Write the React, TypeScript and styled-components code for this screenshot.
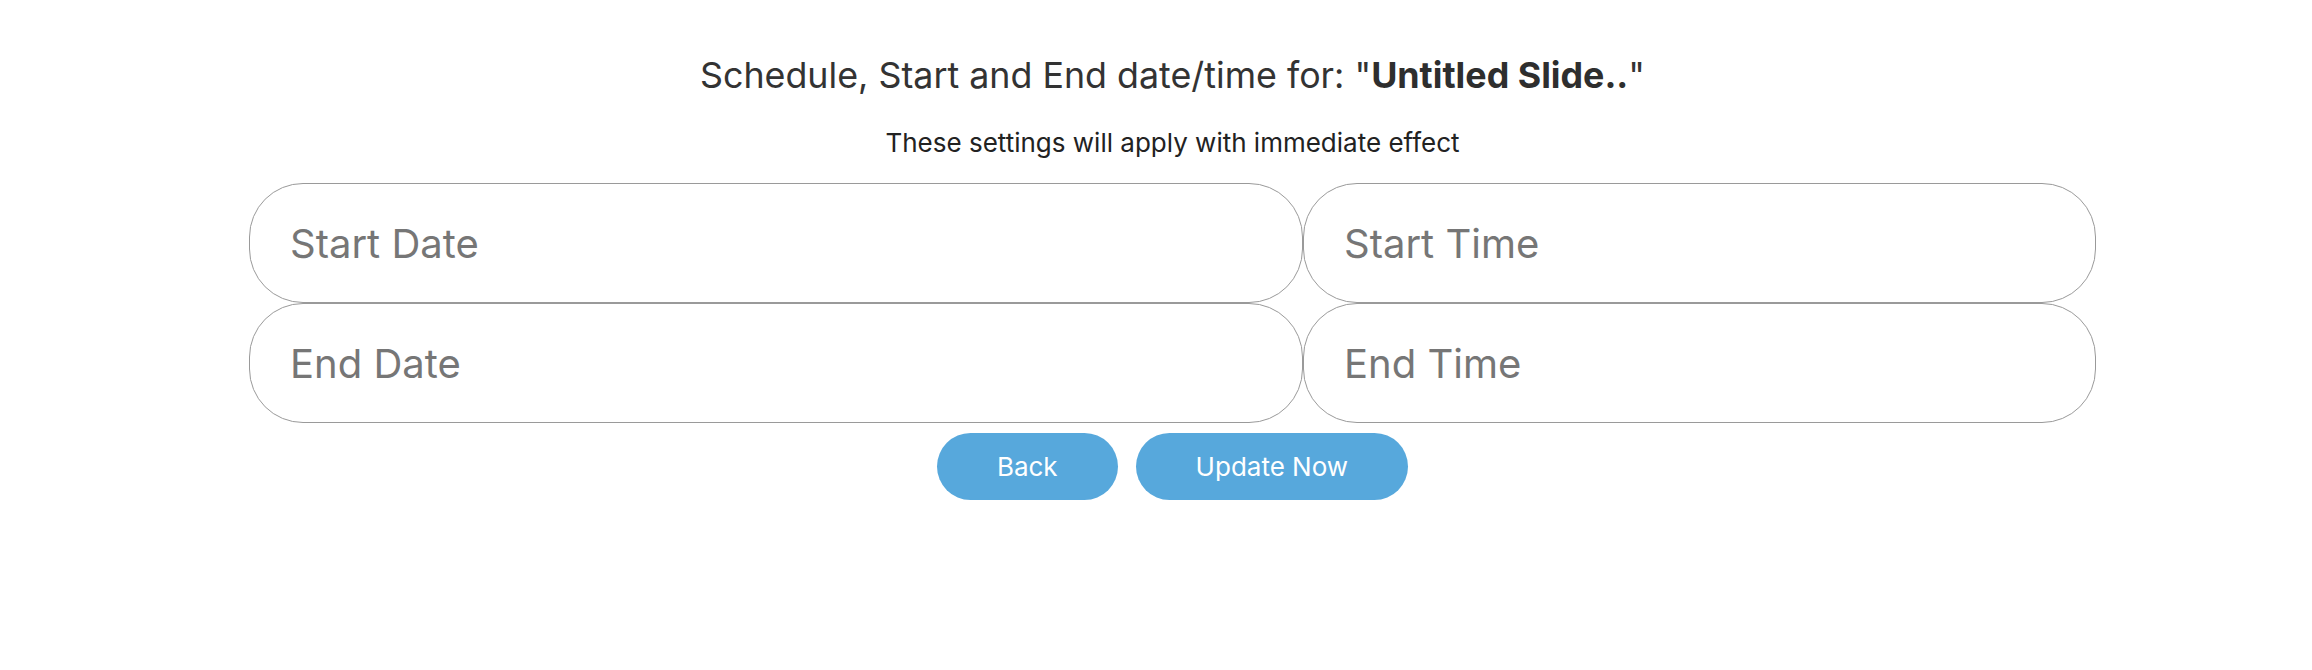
import React from "react";
import styled, { createGlobalStyle } from "styled-components";

const GlobalStyle = createGlobalStyle`
  html, body {
    margin: 0;
    padding: 0;
    background: #ffffff;
    font-family: Inter, "Noto Sans", "Liberation Sans", sans-serif;
  }
`;

const Page = styled.div`
  width: 2312px;
  box-sizing: border-box;
  padding: 54px 0 0 33px;
  display: flex;
  flex-direction: column;
  align-items: center;
`;

const Panel = styled.div`
  width: 1847px;
  display: flex;
  flex-direction: column;
  align-items: center;
`;

const Title = styled.h1`
  margin: 0;
  font-size: 35.8px;
  line-height: 42px;
  font-weight: 400;
  color: #333333;
  text-align: center;
`;

const Strong = styled.strong`
  font-weight: 700;
  color: #2e2e2e;
`;

const Subtitle = styled.p`
  margin: 31px 0 0;
  font-size: 26px;
  line-height: 32px;
  color: #222222;
  text-align: center;
`;

const FieldGrid = styled.div`
  margin-top: 24px;
  width: 100%;
  display: grid;
  grid-template-columns: 1054px 793px;
`;

const Field = styled.input`
  box-sizing: border-box;
  height: 120px;
  width: 100%;
  border: 1px solid #9a9a9a;
  border-radius: 54px;
  padding: 0 0 0 40px;
  font-family: Inter, "Noto Sans", "Liberation Sans", sans-serif;
  font-size: 40px;
  color: #555555;
  background: #ffffff;
  outline: none;

  &::placeholder {
    color: #767676;
  }
`;

const Actions = styled.div`
  margin-top: 10px;
  display: flex;
  gap: 18px;
  justify-content: center;
`;

const Button = styled.button`
  height: 67px;
  padding: 0 60px;
  border: none;
  border-radius: 34px;
  background: #57a8dc;
  color: #ffffff;
  font-family: Inter, "Noto Sans", "Liberation Sans", sans-serif;
  font-size: 26px;
  cursor: pointer;
`;

export default function App() {
  return (
    <>
      <GlobalStyle />
      <Page>
        <Panel>
          <Title>
            Schedule, Start and End date/time for: "<Strong>Untitled Slide..</Strong>"
          </Title>
          <Subtitle>These settings will apply with immediate effect</Subtitle>
          <FieldGrid>
            <Field type="text" placeholder="Start Date" />
            <Field type="text" placeholder="Start Time" />
            <Field type="text" placeholder="End Date" />
            <Field type="text" placeholder="End Time" />
          </FieldGrid>
          <Actions>
            <Button type="button">Back</Button>
            <Button type="button">Update Now</Button>
          </Actions>
        </Panel>
      </Page>
    </>
  );
}
